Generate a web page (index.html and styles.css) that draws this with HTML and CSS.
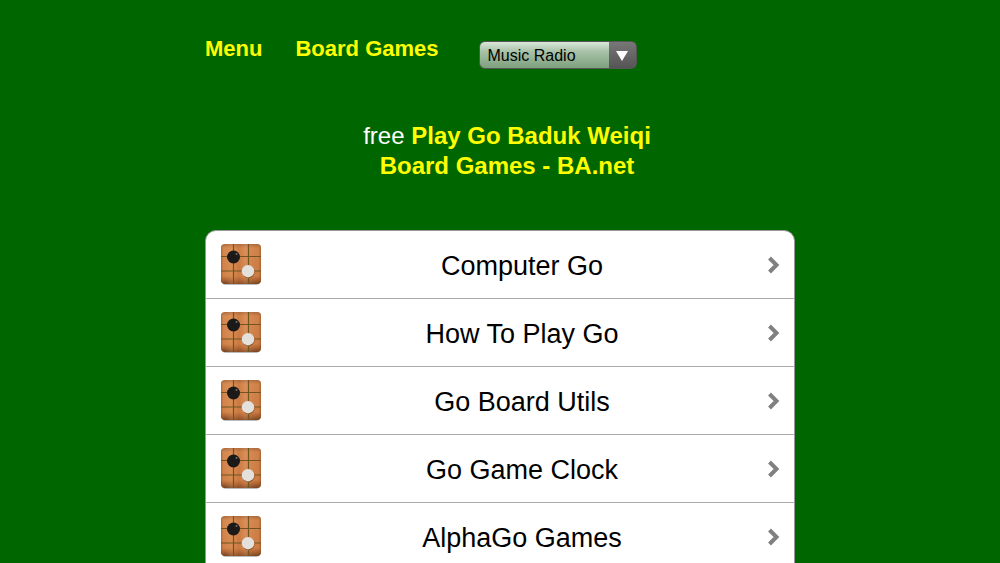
FILE: index.html
```html
<!DOCTYPE html>
<html lang="en">
<head>
    <meta charset="UTF-8">
    <meta name="viewport" content="width=device-width, initial-scale=1.0">
    <title>Play Go Baduk Weiqi Board Games - BA.net</title>
    <link rel="stylesheet" href="styles.css">
</head>
<body>
    <svg class="defs" width="0" height="0" aria-hidden="true">
        <defs>
            <linearGradient id="wood" x1="0" y1="0" x2="0" y2="1">
                <stop offset="0" stop-color="#a0623a"/>
                <stop offset="0.1" stop-color="#d2864e"/>
                <stop offset="0.8" stop-color="#cd7d45"/>
                <stop offset="0.9" stop-color="#a0592c"/>
                <stop offset="1" stop-color="#5f3418"/>
            </linearGradient>
            <linearGradient id="grain" x1="0" y1="0" x2="1" y2="0">
                <stop offset="0" stop-color="#7a3f18" stop-opacity="0.5"/>
                <stop offset="0.08" stop-color="#e8a068" stop-opacity="0.1"/>
                <stop offset="0.28" stop-color="#e8a068" stop-opacity="0.4"/>
                <stop offset="0.45" stop-color="#c47238" stop-opacity="0.4"/>
                <stop offset="0.62" stop-color="#e8a068" stop-opacity="0.4"/>
                <stop offset="0.93" stop-color="#c47238" stop-opacity="0.2"/>
                <stop offset="1" stop-color="#7a3f18" stop-opacity="0.5"/>
            </linearGradient>
            <symbol id="board" viewBox="0 0 40 41">
                <rect x="1" y="2" width="38" height="39" rx="4" fill="#bbb"/>
                <rect width="40" height="40" rx="4" fill="url(#wood)"/>
                <rect width="40" height="40" rx="4" fill="url(#grain)"/>
                <path d="M12.5 0v40M27.5 0v40M0 12.5h40M0 27h40" stroke="#705522" stroke-width="1.2"/>
                <circle cx="12.5" cy="13" r="6.5" fill="#1c1a18"/>
                <circle cx="15.5" cy="10" r="1" fill="#77706a"/>
                <circle cx="27.5" cy="28" r="6.2" fill="#8f5527"/>
                <circle cx="27" cy="27.2" r="6.2" fill="#e4e0dc"/>
            </symbol>
            <symbol id="arrow" viewBox="0 0 12 18">
                <path d="M1.5 2l7 7-7 7" fill="none" stroke="#808080" stroke-width="4"/>
            </symbol>
        </defs>
    </svg>

    <main>
        <nav>
            <a href="#menu">Menu</a>
            <a href="#games">Board Games</a>
            <div class="radio">
                <select aria-label="Music Radio">
                    <option>Music Radio</option>
                </select>
                <svg class="down" width="12" height="10" viewBox="0 0 12 10" aria-hidden="true">
                    <path d="M0 0h12L6 10z" fill="#fff"/>
                </svg>
            </div>
        </nav>

        <h1>
            free <a href="#home">Play Go Baduk Weiqi</a>
            <a href="#home">Board Games - BA.net</a>
        </h1>

        <ul id="games">
            <li><a href="#computer">
                <svg class="icon"><use href="#board"/></svg>
                <span>Computer Go</span>
                <svg class="arrow"><use href="#arrow"/></svg>
            </a></li>
            <li><a href="#how">
                <svg class="icon"><use href="#board"/></svg>
                <span>How To Play Go</span>
                <svg class="arrow"><use href="#arrow"/></svg>
            </a></li>
            <li><a href="#utils">
                <svg class="icon"><use href="#board"/></svg>
                <span>Go Board Utils</span>
                <svg class="arrow"><use href="#arrow"/></svg>
            </a></li>
            <li><a href="#clock">
                <svg class="icon"><use href="#board"/></svg>
                <span>Go Game Clock</span>
                <svg class="arrow"><use href="#arrow"/></svg>
            </a></li>
            <li><a href="#alphago">
                <svg class="icon"><use href="#board"/></svg>
                <span>AlphaGo Games</span>
                <svg class="arrow"><use href="#arrow"/></svg>
            </a></li>
        </ul>
    </main>
</body>
</html>
```
FILE: styles.css
```css
* {
    box-sizing: border-box;
}

body {
    margin: 0;
    background-color: #006600;
    font-family: Helvetica, "Liberation Sans", Arial, sans-serif;
}

.defs {
    position: absolute;
}

main {
    max-width: 590px;
    margin: 0 auto;
    padding: 36px 0 20px;
}

nav {
    display: flex;
    align-items: flex-start;
    gap: 33px;
    font-size: 22px;
    line-height: 26px;
}

nav a, h1 a {
    color: #ffff00;
    font-weight: bold;
    text-decoration: none;
}

.radio {
    position: relative;
    margin: 5px 0 0 7px;
}

select {
    display: block;
    appearance: none;
    width: 158px;
    height: 28px;
    padding: 1px 36px 0 8px;
    border: 1px solid #555;
    border-radius: 6px;
    background:
        linear-gradient(#777, #555) right / 27px 100% no-repeat,
        linear-gradient(#dce8dc, #a9c3a9 35%, #7da07d);
    color: #000;
    font-family: inherit;
    font-size: 16px;
}

.down {
    position: absolute;
    right: 9px;
    top: 10px;
    pointer-events: none;
}

h1 {
    max-width: 320px;
    margin: 52px auto 49px;
    padding-left: 14px;
    color: #fff;
    font-size: 24px;
    font-weight: normal;
    line-height: 30px;
    text-align: center;
}

ul {
    margin: 0;
    padding: 0;
    list-style: none;
    background-color: #fff;
    border: 1px solid #999;
    border-radius: 11px 11px 0 0;
}

li {
    border-bottom: 1px solid #aaa;
}

li:last-child {
    border-bottom: none;
}

li a {
    display: flex;
    align-items: center;
    height: 67px;
    padding: 0 14px 0 15px;
    color: #000;
    font-size: 27px;
    text-decoration: none;
}

li span {
    flex: 1;
    padding: 3px 0 0 15px;
    text-align: center;
}

.icon {
    width: 40px;
    height: 41px;
}

.arrow {
    width: 12px;
    height: 18px;
}
```
